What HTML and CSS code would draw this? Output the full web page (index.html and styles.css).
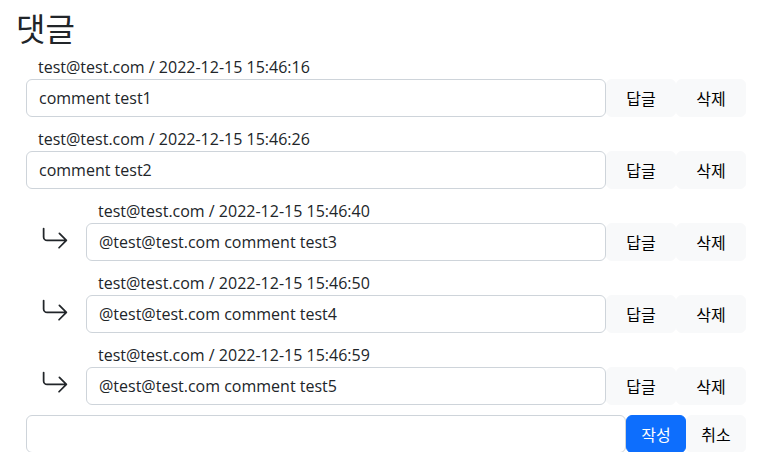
FILE: index.html
```html
<!DOCTYPE html>
<html lang="ko">
<head>
<meta charset="utf-8">
<title>댓글</title>
<link rel="stylesheet" href="styles.css">
</head>
<body>
<h2 class="title">댓글</h2>
<div class="comments">
  <div class="comment">
    <div class="body">
      <div class="meta">test@test.com / 2022-12-15 15:46:16</div>
      <div class="line">
        <input class="field" type="text" value="comment test1" readonly>
        <button class="btn btn-light">답글</button>
        <button class="btn btn-light">삭제</button>
      </div>
    </div>
  </div>
  <div class="comment">
    <div class="body">
      <div class="meta">test@test.com / 2022-12-15 15:46:26</div>
      <div class="line">
        <input class="field" type="text" value="comment test2" readonly>
        <button class="btn btn-light">답글</button>
        <button class="btn btn-light">삭제</button>
      </div>
    </div>
  </div>
  <div class="comment reply">
    <div class="arrow"><svg viewBox="0 0 16 16" width="28" height="28" fill="currentColor"><path fill-rule="evenodd" d="M1.5 1.5A.5.5 0 0 0 1 2v4.8a2.5 2.5 0 0 0 2.5 2.5h9.793l-3.347 3.346a.5.5 0 0 0 .708.708l4.2-4.2a.5.5 0 0 0 0-.708l-4-4a.5.5 0 0 0-.708.708L13.293 8.3H3.5A1.5 1.5 0 0 1 2 6.8V2a.5.5 0 0 0-.5-.5"/></svg></div>
    <div class="body">
      <div class="meta">test@test.com / 2022-12-15 15:46:40</div>
      <div class="line">
        <input class="field" type="text" value="@test@test.com comment test3" readonly>
        <button class="btn btn-light">답글</button>
        <button class="btn btn-light">삭제</button>
      </div>
    </div>
  </div>
  <div class="comment reply">
    <div class="arrow"><svg viewBox="0 0 16 16" width="28" height="28" fill="currentColor"><path fill-rule="evenodd" d="M1.5 1.5A.5.5 0 0 0 1 2v4.8a2.5 2.5 0 0 0 2.5 2.5h9.793l-3.347 3.346a.5.5 0 0 0 .708.708l4.2-4.2a.5.5 0 0 0 0-.708l-4-4a.5.5 0 0 0-.708.708L13.293 8.3H3.5A1.5 1.5 0 0 1 2 6.8V2a.5.5 0 0 0-.5-.5"/></svg></div>
    <div class="body">
      <div class="meta">test@test.com / 2022-12-15 15:46:50</div>
      <div class="line">
        <input class="field" type="text" value="@test@test.com comment test4" readonly>
        <button class="btn btn-light">답글</button>
        <button class="btn btn-light">삭제</button>
      </div>
    </div>
  </div>
  <div class="comment reply">
    <div class="arrow"><svg viewBox="0 0 16 16" width="28" height="28" fill="currentColor"><path fill-rule="evenodd" d="M1.5 1.5A.5.5 0 0 0 1 2v4.8a2.5 2.5 0 0 0 2.5 2.5h9.793l-3.347 3.346a.5.5 0 0 0 .708.708l4.2-4.2a.5.5 0 0 0 0-.708l-4-4a.5.5 0 0 0-.708.708L13.293 8.3H3.5A1.5 1.5 0 0 1 2 6.8V2a.5.5 0 0 0-.5-.5"/></svg></div>
    <div class="body">
      <div class="meta">test@test.com / 2022-12-15 15:46:59</div>
      <div class="line">
        <input class="field" type="text" value="@test@test.com comment test5" readonly>
        <button class="btn btn-light">답글</button>
        <button class="btn btn-light">삭제</button>
      </div>
    </div>
  </div>
  <div class="write line">
    <input class="field" type="text" value="">
    <button class="btn btn-primary btn-write">작성</button>
    <button class="btn btn-light btn-write">취소</button>
  </div>
</div>
</body>
</html>
```

FILE: styles.css
```css
* { box-sizing: border-box; }
html, body {
  margin: 0;
  padding: 0;
  background: #fff;
}
body {
  padding: 8px 18px 0 26px;
  font-family: "Open Sans", "Noto Sans CJK KR", sans-serif;
  font-size: 16px;
  line-height: 24px;
  color: #212529;
  overflow: hidden;
  height: 452px;
}
.title {
  margin: 0 0 8px -10px;
  font-family: "Noto Sans CJK KR", sans-serif;
  font-size: 32px;
  font-weight: 400;
  line-height: 39px;
}
.comments {
  display: flex;
  flex-direction: column;
  gap: 10px;
}
.comment {
  display: flex;
}
.body {
  flex: 1;
  min-width: 0;
}
.reply .arrow {
  width: 60px;
  flex: none;
  padding: 26px 0 0 15px;
  color: #212529;
}
.arrow svg { display: block; }
.meta {
  padding-left: 12px;
  height: 24px;
  font-size: 16px;
  line-height: 24px;
  white-space: nowrap;
}
.line {
  display: flex;
  align-items: stretch;
}
.field {
  flex: 1;
  min-width: 0;
  height: 38px;
  margin: 0;
  padding: 6px 12px;
  border: 1px solid #ced4da;
  border-radius: 6px;
  font: inherit;
  font-size: 16px;
  color: #212529;
  background: #fff;
  outline: none;
}
.btn {
  width: 70px;
  height: 38px;
  margin: 0;
  padding: 0;
  border: 1px solid #f8f9fa;
  border-radius: 6px;
  font-family: "Noto Sans CJK KR", sans-serif;
  font-size: 16px;
  line-height: 24px;
  cursor: pointer;
}
.btn-light {
  background: #f8f9fa;
  color: #000;
}
.btn-primary {
  background: #0d6efd;
  border-color: #0d6efd;
  color: #fff;
}
.btn-write { width: 60px; }
```
